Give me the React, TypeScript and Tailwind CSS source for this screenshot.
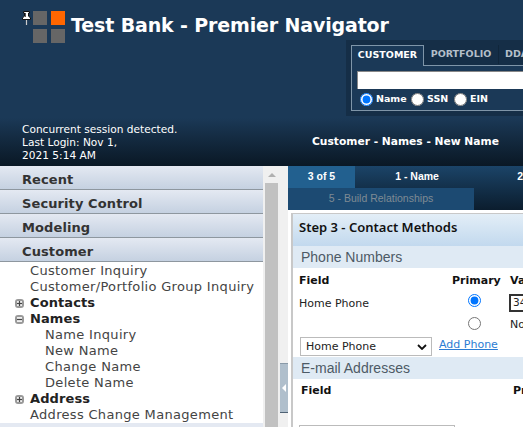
const base = "font-['DejaVu_Sans',sans-serif]";

function Accordion({ label }: { label: string }) {
  return (
    <div className="flex h-6 items-center border-b border-[#8e979f] bg-gradient-to-b from-[#e4e9f2] to-[#c5d1e1] pt-[5px] pl-[22px] text-[13px] font-bold tracking-[0.1px] text-[#333]">
      {label}
    </div>
  );
}

function TreeIcon({ open }: { open?: boolean }) {
  return (
    <span className="mr-[6px] ml-[15px] flex h-[9px] w-[9px] items-center justify-center rounded-[3px] bg-[#999]">
      <svg width="7" height="7" viewBox="0 0 7 7">
        <rect x="1" y="1" width="5" height="5" fill="#eee" />
        <path d="M1 3.5h5" stroke="#444" strokeWidth="1.2" />
        {!open && <path d="M3.5 1v5" stroke="#444" strokeWidth="1.2" />}
      </svg>
    </span>
  );
}

function TreeLink({ label, indent }: { label: string; indent?: boolean }) {
  return (
    <div className={indent ? "h-4 pl-[45px] leading-4 tracking-[0.32px]" : "h-4 pl-[30px] leading-4 tracking-[0.32px]"}>
      {label}
    </div>
  );
}

function TreeGroup({ label, open }: { label: string; open?: boolean }) {
  return (
    <div className="flex h-4 items-center font-bold tracking-[0.1px] text-[#222]">
      <TreeIcon open={open} />
      {label}
    </div>
  );
}

function Pin() {
  return (
    <svg width="11" height="16" viewBox="0 0 11 16" className="mt-[10px] ml-[21px] shrink-0">
      <path d="M2.5 1.5h6v1.5h-1v3l2 2v1.5h-8V8l2-2V3h-1z" fill="#fff" stroke="#111" strokeWidth="1" />
      <path d="M4.5 3v4" stroke="#555" strokeWidth="1" />
      <path d="M5.5 10v5" stroke="#ccc" strokeWidth="1.2" />
    </svg>
  );
}

export default function App() {
  return (
    <div className={`relative flex h-[427px] w-[523px] flex-col overflow-hidden bg-white ${base}`}>
      <header className="flex h-[166px] shrink-0 flex-col bg-[#1b3957]">
        <div className="flex h-[40px] shrink-0">
          <Pin />
          <div className="mt-[11px] ml-[1px] grid h-8 w-8 shrink-0 grid-cols-2 gap-1">
            <span className="bg-[#666]" />
            <span className="bg-[#ff6600]" />
            <span className="bg-[#666]" />
            <span className="bg-[#666]" />
          </div>
          <h1 className="mt-[13px] ml-[6px] text-[19px] leading-6 font-bold tracking-[-0.14px] whitespace-nowrap text-white">
            Test Bank - Premier Navigator
          </h1>
        </div>

        <div className="ml-[346px] h-[76px] shrink-0 overflow-hidden bg-[#152e47] pt-[5px] pl-[5px]">
          <div className="flex h-[21px] w-[240px] border-b border-[#7f95a8] text-[9.5px] font-bold">
            <div className="flex h-[21px] w-[73px] items-center justify-center border-x border-t border-[#7f95a8] bg-[#1b3957] pb-px text-white">
              CUSTOMER
            </div>
            <div className="flex h-[19px] w-[75px] items-center justify-center border-r border-[#10263b] text-[#b4bfca]">
              PORTFOLIO
            </div>
            <div className="flex h-[19px] items-center pl-[6px] text-[#b4bfca]">DDA</div>
          </div>
          <div className="h-[45px] w-[240px] border-x border-b border-[#7f95a8] bg-[#1b3957] px-[5px] pt-[5px]">
            <div className="h-[18px] w-full rounded-[1px] border-t border-l border-[#888] bg-white" />
            <div className="mt-[2px] flex h-[16px] items-center text-[9.5px] font-bold text-white">
              <input type="radio" name="kind" defaultChecked className="m-0 ml-[3px] h-[13px] w-[13px] accent-[#0075ff]" />
              <span className="ml-[3px] w-[35px]">Name</span>
              <input type="radio" name="kind" className="m-0 h-[13px] w-[13px]" />
              <span className="ml-[3px] w-[27px]">SSN</span>
              <input type="radio" name="kind" className="m-0 h-[13px] w-[13px]" />
              <span className="ml-[3px]">EIN</span>
            </div>
          </div>
        </div>

        <div className="mt-[2px] flex h-[48px] shrink-0 items-center bg-gradient-to-b from-[#1b3957] to-[#0a1825] text-white">
          <div className="ml-[22px] w-[290px] text-[10.6px] leading-[13px]">
            Concurrent session detected.
            <br />
            Last Login: Nov 1,
            <br />
            2021 5:14 AM
          </div>
          <div className="text-[10.7px] font-bold whitespace-nowrap">Customer - Names - New Name</div>
        </div>
      </header>

      <div className="flex min-h-0 flex-1">
        <aside className="w-[263px] shrink-0 text-[13px] text-[#444]">
          <Accordion label="Recent" />
          <Accordion label="Security Control" />
          <Accordion label="Modeling" />
          <Accordion label="Customer" />
          <div className="pt-px">
            <TreeLink label="Customer Inquiry" />
            <TreeLink label="Customer/Portfolio Group Inquiry" />
            <TreeGroup label="Contacts" />
            <TreeGroup label="Names" open />
            <TreeLink label="Name Inquiry" indent />
            <TreeLink label="New Name" indent />
            <TreeLink label="Change Name" indent />
            <TreeLink label="Delete Name" indent />
            <TreeGroup label="Address" />
            <TreeLink label="Address Change Management" />
          </div>
          <div className="h-2 bg-[#e4e9f2]" />
        </aside>

        <div className="flex w-[25px] shrink-0 flex-col bg-[#f0f0f0] pl-[2px]">
          <div className="flex h-[17px] w-[13px] items-center justify-center">
            <div className="h-0 w-0 border-x-[4px] border-b-[4px] border-x-transparent border-b-[#b0b0b0]" />
          </div>
          <div className="w-[13px] flex-1 bg-[#c1c1c1]" />
        </div>

        <main className="min-w-0 flex-1 overflow-hidden">
          <div className="h-[44px] w-[235px] bg-gradient-to-b from-[#1b4468] to-[#0b1d2e] font-['Liberation_Sans',sans-serif] text-[10.5px]">
            <div className="flex h-[22px] items-center font-bold whitespace-nowrap text-white">
              <div className="flex h-[22px] w-[68px] items-center justify-center bg-[#22608f]">3 of 5</div>
              <div className="flex w-[126px] justify-center">1 - Name</div>
              <div className="ml-[38px]">2</div>
            </div>
            <div className="flex h-[22px] w-[186px] items-center justify-center bg-[#1c4a72] text-[#7f8a94]">
              5 - Build Relationships
            </div>
          </div>

          <div className="mt-[3px] ml-[3px] w-[400px] border-t border-l-2 border-[#c8c8c8]">
            <div className="flex h-[32px] items-center bg-gradient-to-b from-[#e3eef7] to-[#c2d9ee] pb-[4px] pl-[6px] font-['Noto_Sans',sans-serif] text-[13px] font-semibold text-[#111]">
              Step 3 - Contact Methods
            </div>
            <div className="flex h-[22px] items-center bg-[#dfeaf4] pl-[8px] font-['Liberation_Sans',sans-serif] text-[14px] text-[#4d5a66]">
              Phone Numbers
            </div>

            <div className="grid grid-cols-[153px_minmax(0,1fr)] pl-[6px] text-[11px] text-[#222]">
              <div className="pt-[5px] leading-4 font-bold text-[#111]">Field</div>
              <div className="flex pt-[5px] leading-4 font-bold text-[#111]">
                <span className="w-[58px]">Primary</span>
                <span>Value</span>
              </div>
              <div className="flex h-[25px] items-center pt-[5px]">Home Phone</div>
              <div className="flex h-[25px] items-center">
                <div className="flex w-[57px] pb-[3px] pl-[16px]">
                  <input type="radio" name="primary" defaultChecked className="m-0 h-[13px] w-[13px] accent-[#0075ff]" />
                </div>
                <div className="mt-[3px] flex h-[18px] w-[120px] items-center border-2 border-[#333] pl-[2px] text-[10.5px]">3456</div>
              </div>
              <div className="h-[20px]" />
              <div className="flex h-[20px] items-center">
                <div className="flex w-[58px] pb-[2px] pl-[16px]">
                  <input type="radio" name="primary" className="m-0 h-[13px] w-[13px]" />
                </div>
                <span className="pt-[2px]">None</span>
              </div>
            </div>

            <div className="flex h-[23px] items-start pt-[3px] pl-[7px] text-[11px]">
              <div className="flex h-[19px] w-[132px] items-center justify-between border border-[#bbb] pr-[4px] pl-[5px] text-[#222]">
                <span className="pt-[2px]">Home Phone</span>
                <svg width="10" height="6" viewBox="0 0 10 6">
                  <path d="M1 1l4 4 4-4" fill="none" stroke="#111" strokeWidth="1.8" />
                </svg>
              </div>
              <a className="mt-px ml-[7px] leading-[14px] text-[#2b7cd3] underline">Add Phone</a>
            </div>

            <div className="flex h-[22px] items-center bg-[#dfeaf4] pl-[8px] font-['Liberation_Sans',sans-serif] text-[14px] text-[#4d5a66]">
              E-mail Addresses
            </div>
            <div className="flex pt-[4px] pl-[8px] text-[11px] leading-4 font-bold text-[#111]">
              <span className="w-[212px]">Field</span>
              <span>Primary</span>
            </div>
            <div className="mt-[26px] ml-[6px] h-8 w-[156px] border border-[#bbb]" />
          </div>
        </main>
      </div>

      <div className="absolute top-[363px] left-[280px] flex h-[50px] w-2 items-center justify-center border-y border-b-[#4f6274] border-t-[#8a9aa8] bg-[#b0bfcc]">
        <div className="h-0 w-0 border-y-[4px] border-r-[4px] border-y-transparent border-r-white" />
      </div>
    </div>
  );
}
